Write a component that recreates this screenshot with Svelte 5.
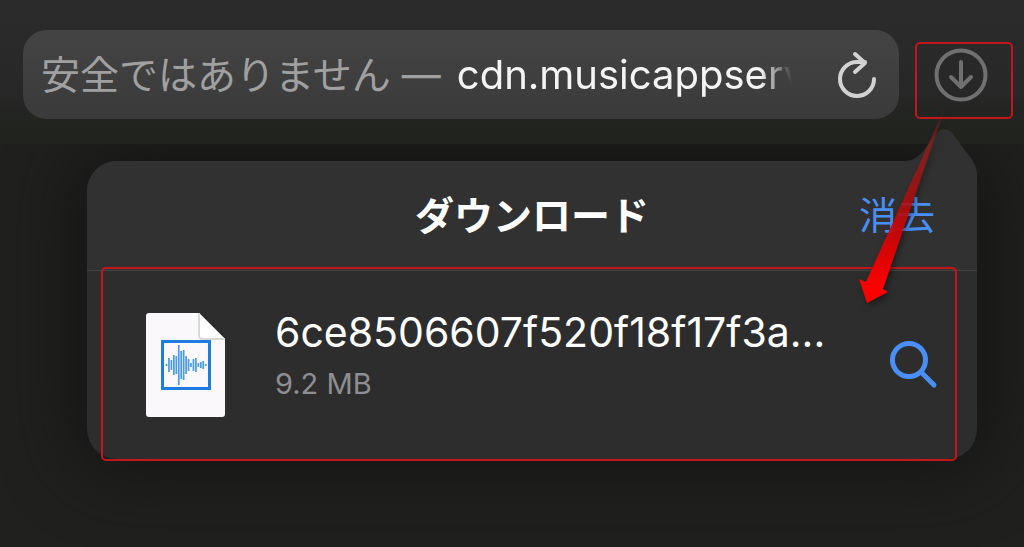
<script>
  let address = 'cdn.musicappserver.com'

  let downloads = [
    { name: '6ce8506607f520f18f17f3a...', size: '9.2 MB', marked: true },
  ]

  // half heights of the bars in the audio file icon
  const wave = [1, 7, 5, 10, 9, 20, 14, 15, 9, 6, 2, 6, 7, 2, 3, 4, 1]

  function clearDownloads() {
    downloads = []
  }
</script>

<style>
  :global(body) {
    background: #20201f;
  }

  .page {
    min-height: 100vh;
    overflow: hidden;
    color: #fff;
    font-family: Inter, 'Noto Sans CJK JP', sans-serif;
  }

  button {
    padding: 0;
    border: 0;
    background: none;
    color: inherit;
    font: inherit;
    cursor: pointer;
  }

  svg {
    display: block;
  }

  .toolbar {
    position: relative;
    z-index: 1;
    display: flex;
    gap: 16px;
    padding: 30px 11px 25px 23px;
    background: linear-gradient(#2b2b2b, #282828 60%, #222420 86%, #21231f);
  }

  .address {
    flex: 1;
    min-width: 0;
    display: flex;
    align-items: center;
    height: 89px;
    box-sizing: border-box;
    padding: 0 21px 0 18px;
    border-radius: 24px;
    background: linear-gradient(#444, #3a3a3a);
    font-size: 40px;
  }

  .address label {
    padding-bottom: 6px;
    color: #a0a0a0;
    font-size: 39px;
    font-weight: 400;
    white-space: nowrap;
  }

  .address input {
    flex: 1;
    min-width: 0;
    margin: 0 44px 0 16px;
    padding: 0;
    border: 0;
    outline: 0;
    background: none;
    color: #f4f4f4;
    font: inherit;
    mask-image: linear-gradient(to left, transparent, #000 32px);
  }

  .downloads-button {
    position: relative;
    width: 98px;
    display: grid;
    place-items: center;
    padding-right: 6px;
    color: #707070;
  }

  .mark {
    position: absolute;
    box-sizing: border-box;
    border: 2px solid #c4171b;
    border-radius: 5px;
    pointer-events: none;
  }

  .downloads-button .mark {
    inset: 12px 0 0;
  }

  .popover {
    position: relative;
    margin: 17px 47px 88px 87px;
    border-radius: 30px 16px 30px 30px;
    background: #2d2d2d;
    box-shadow: 0 0 70px 10px #141512;
  }

  .tail {
    position: absolute;
    z-index: 2;
    top: -33px;
    right: 0;
  }

  .popover header {
    display: grid;
    grid-template-columns: 1fr auto 1fr;
    align-items: center;
    height: 103px;
    padding: 0 42px 6px;
    border-bottom: 1px solid #444;
    border-radius: 30px 16px 0 0;
    background: #313131;
  }

  h1 {
    grid-column: 2;
    margin: 0;
    font-size: 39px;
    font-weight: 700;
  }

  .clear {
    position: relative;
    z-index: 2;
    justify-self: end;
    color: #4a8ff5;
    font-size: 38px;
    font-weight: 400;
  }

  ul {
    margin: 0;
    padding: 0;
    list-style: none;
  }

  li {
    position: relative;
    display: flex;
    align-items: center;
    height: 188px;
    padding: 0 38px 0 59px;
  }

  li .mark {
    inset: -4px 20px -2px 14px;
  }

  .info {
    flex: 1;
    min-width: 0;
    margin: 0 50px;
    padding-bottom: 14px;
    white-space: nowrap;
  }

  .name {
    font-size: 41px;
    line-height: 52px;
  }

  .size {
    color: #8e8e93;
    font-size: 29px;
    line-height: 52px;
  }

  .arrow {
    position: absolute;
    z-index: 3;
    top: -58px;
    right: 24px;
    pointer-events: none;
    filter: drop-shadow(2px 3px 3px rgba(0, 0, 0, 0.4));
  }
</style>

<div class="page">
  <div class="toolbar">
    <div class="address">
      <label for="address">安全ではありません —</label>
      <input id="address" type="text" bind:value={address} />
      <button aria-label="再読み込み">
        <svg width="42" height="50" viewBox="0 0 42 50" fill="none" stroke="#d2d2d2" stroke-width="4" stroke-linecap="round" stroke-linejoin="round">
          <path d="M38 29A17 17 0 1 1 21 12H29M19 4L29 13L19 22" />
        </svg>
      </button>
    </div>
    <button class="downloads-button" aria-label="ダウンロード">
      <svg width="54" height="54" viewBox="0 0 54 54" fill="none" stroke="currentColor" stroke-width="4" stroke-linecap="round" stroke-linejoin="round">
        <circle cx="27" cy="27" r="24.500" />
        <path d="M27 14V39M17 29L27 39L37 29" />
      </svg>
      <span class="mark"></span>
    </button>
  </div>

  <div class="popover">
    <svg class="tail" width="80" height="64" viewBox="0 0 80 64">
      <path d="M0 33H8C17 33 22 28 27 22L40 5Q47 -3 55 5L74 30Q80 38 80 48V64H0Z" fill="#313131" />
    </svg>
    <header>
      <h1>ダウンロード</h1>
      <button class="clear" on:click={clearDownloads}>消去</button>
    </header>
    <ul>
      {#each downloads as item}
        <li>
          <svg width="79" height="104" viewBox="0 0 79 104">
            <path d="M3 0H53L79 26V101Q79 104 76 104H3Q0 104 0 101V3Q0 0 3 0Z" fill="#faf8fa" />
            <path d="M53 0V22Q53 26 57 26H79" fill="#fff" stroke="#d8d8d8" stroke-width="2" />
            <rect x="16.500" y="28.500" width="47" height="47" fill="none" stroke="#1d7ce0" stroke-width="3" />
            {#each wave as half, i}
              <path d="M{20.5 + i * 2.45} {52 - half}v{half * 2}" stroke="#4a9be0" stroke-width="1.700" />
            {/each}
          </svg>
          <div class="info">
            <div class="name">{item.name}</div>
            <div class="size">{item.size}</div>
          </div>
          <button aria-label="検索">
            <svg width="50" height="50" viewBox="0 0 50 50" fill="none" stroke="#4a8ff5" stroke-width="5" stroke-linecap="round">
              <circle cx="20" cy="20" r="16.500" />
              <path d="M32 32L45 45" />
            </svg>
          </button>
          {#if item.marked}
            <span class="mark"></span>
          {/if}
        </li>
      {/each}
    </ul>
    <svg class="arrow" width="100" height="204" viewBox="0 0 100 204">
      <defs>
        <linearGradient id="fade" x1="0" y1="0" x2="0" y2="1">
          <stop offset="0" stop-color="#c01818" stop-opacity="0.100" />
          <stop offset="0.250" stop-color="#a81818" stop-opacity="0.700" />
          <stop offset="0.500" stop-color="#b80c0c" stop-opacity="0.850" />
          <stop offset="0.700" stop-color="#d80404" stop-opacity="0.950" />
          <stop offset="0.900" stop-color="#fa0000" />
        </linearGradient>
      </defs>
      <path d="M93 2L13 179L6 176L14 200L35 189L30 186Z" fill="url(#fade)" />
    </svg>
  </div>
</div>
